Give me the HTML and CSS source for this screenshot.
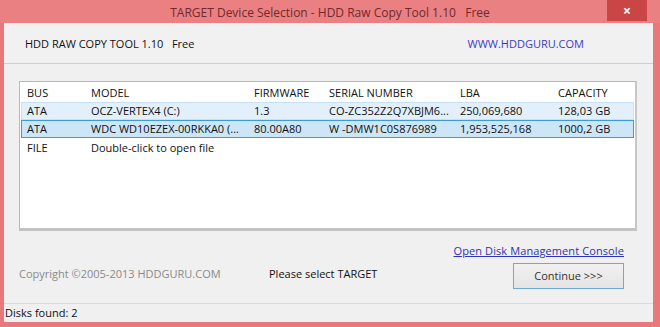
FILE: index.html
```html
<!DOCTYPE html>
<html>
<head>
<meta charset="utf-8">
<link rel="stylesheet" href="styles.css">
</head>
<body>
<div class="window">
  <div class="titlebar">
    <span></span>
    <span class="title">TARGET Device Selection - HDD Raw Copy Tool 1.10&nbsp;&nbsp;&nbsp;Free</span>
    <span class="close">×</span>
  </div>
  <div class="client">
    <div class="header">
      <span class="app">HDD RAW COPY TOOL 1.10&nbsp;&nbsp;&nbsp;Free</span>
      <span class="site">WWW.HDDGURU.COM</span>
    </div>
    <div class="main">
      <div class="list">
        <div class="row head">
          <span>BUS</span><span>MODEL</span><span>FIRMWARE</span><span>SERIAL NUMBER</span><span>LBA</span><span>CAPACITY</span>
        </div>
        <div class="row hover">
          <span>ATA</span><span>OCZ-VERTEX4 (C:)</span><span>1.3</span><span>CO-ZC352Z2Q7XBJM6...</span><span>250,069,680</span><span>128,03 GB</span>
        </div>
        <div class="row selected">
          <span>ATA</span><span>WDC WD10EZEX-00RKKA0 (...</span><span>80.00A80</span><span>W -DMW1C0S876989</span><span>1,953,525,168</span><span>1000,2 GB</span>
        </div>
        <div class="row">
          <span>FILE</span><span>Double-click to open file</span><span></span><span></span><span></span><span></span>
        </div>
      </div>
      <div class="linkrow"><a class="console">Open Disk Management Console</a></div>
      <div class="footer">
        <span class="copy">Copyright ©2005-2013 HDDGURU.COM</span>
        <span class="please">Please select TARGET</span>
        <span class="btn">Continue &gt;&gt;&gt;</span>
      </div>
    </div>
    <div class="status">Disks found: 2</div>
  </div>
</div>
</body>
</html>
```
FILE: styles.css
```css
html, body { margin: 0; padding: 0; }
body {
  width: 660px; height: 327px; overflow: hidden;
  background: #e8787b;
  font-family: "Open Sans", "Noto Sans", sans-serif;
  font-size: 11px;
  color: #111;
}
.window { display: flex; flex-direction: column; height: 327px; }
.titlebar {
  height: 23px;
  display: grid;
  grid-template-columns: 1fr auto 1fr;
  align-items: start;
  background: #ea8082;
}
.title {
  color: #6e2a2c;
  font-size: 12px;
  line-height: 26px;
}
.close {
  justify-self: end;
  margin-right: 13px;
  width: 40px; height: 21px;
  background: #c94546;
  color: #fff;
  text-align: center;
  font-size: 14px; line-height: 21px;
  font-weight: bold;
}
.client {
  flex: 1;
  margin: 0 7px 5px 4px;
  background: #f0f0f0;
  display: flex; flex-direction: column;
}
.header {
  height: 40px;
  border-bottom: 1px solid #cfcfcf;
  display: flex; align-items: center; justify-content: space-between;
  padding: 0 69px 0 21px;
  background: #f1f1f1;
}
.site { color: #3a3ac8; }
.main { flex: 1; padding: 17px 16px 0 15px; display: flex; flex-direction: column; }
.list {
  height: 145px;
  background: #fff;
  border: 1px solid #b9b9b9;
  border-bottom: 3px solid #c3c3c3;
  border-right: 2px solid #c7c7c7;
  padding-top: 1px;
}
.row {
  display: grid;
  grid-template-columns: 64px 163px 75px 131px 98px 1fr;
  height: 16px; line-height: 16px;
  padding-left: 5px;
  margin: 0 1px;
  border: 1px solid transparent;
}
.row.head { height: 16px; line-height: 18px; margin-bottom: 1px; }
.row.hover { background: #e3f0fb; border-color: #c6e1f5; }
.row.selected { background: #cde6f7; border-color: #3d9bd4; }
.row:last-child { line-height: 18px; }
.linkrow { display: flex; justify-content: flex-end; padding: 12px 13px 0 0; }
.console { color: #2c33b5; text-decoration: underline; font-weight: 500; letter-spacing: 0.1px; }
.footer { display: flex; align-items: flex-start; margin-top: 5px; }
.copy, .please { line-height: 18px; padding-top: 2px; }
.copy { color: #8a8a8a; width: 250px; }
.please { width: 244px; }
.btn {
  width: 109px; height: 24px;
  border: 1px solid #6fa8dc;
  background: linear-gradient(#f1f1f1, #e4e4e4);
  text-align: center; line-height: 24px;
  color: #333;
}
.status {
  margin-top: auto;
  height: 18px; line-height: 18px;
  border-top: 1px solid #dadada;
  padding-left: 1px;
  background: #f0f0f0;
}
```
